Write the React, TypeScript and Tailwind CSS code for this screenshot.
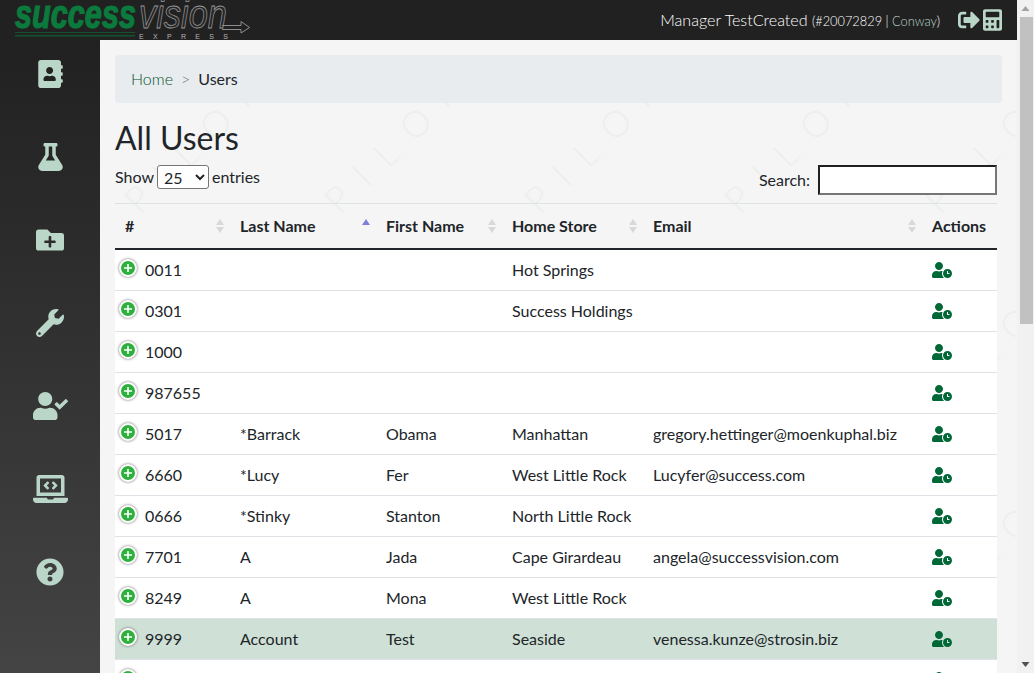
import { FaAddressBook, FaFlask, FaFolderPlus, FaWrench, FaUserCheck, FaLaptopCode, FaQuestionCircle, FaSignOutAlt, FaCalculator, FaUserClock } from "react-icons/fa";

const rows = [
  ["0011", "", "", "Hot Springs", ""],
  ["0301", "", "", "Success Holdings", ""],
  ["1000", "", "", "", ""],
  ["987655", "", "", "", ""],
  ["5017", "*Barrack", "Obama", "Manhattan", "gregory.hettinger@moenkuphal.biz"],
  ["6660", "*Lucy", "Fer", "West Little Rock", "Lucyfer@success.com"],
  ["0666", "*Stinky", "Stanton", "North Little Rock", ""],
  ["7701", "A", "Jada", "Cape Girardeau", "angela@successvision.com"],
  ["8249", "A", "Mona", "West Little Rock", ""],
  ["9999", "Account", "Test", "Seaside", "venessa.kunze@strosin.biz"],
  ["", "", "", "", ""],
];

const letters: [string, number, number][] = [["P", 37, 158], ["I", 61, 135], ["L", 85, 113], ["O", 115, 83], ["T", 140, 57]];

function Watermark() {
  const marks = [];
  for (let c = 0; c < 5; c++) {
    for (let r = 0; r < 4; r++) {
      for (const [ch, x, y] of letters) {
        marks.push(
          <span
            key={`${c}-${r}-${ch}`}
            className="absolute w-12 h-12 flex items-center justify-center text-[36px] leading-none font-light text-[#ecefec]"
            style={{ left: x - 24 + c * 200, top: y - 24 + r * 200, transform: "rotate(-45deg)" }}
          >
            {ch}
          </span>
        );
      }
    }
  }
  return <div className="absolute inset-0 overflow-hidden pointer-events-none">{marks}</div>;
}

function Sort({ active }: { active?: boolean }) {
  return (
    <svg width="8" height="14" viewBox="0 0 8 14" className="shrink-0">
      <polygon points="4,0 8,6 0,6" fill={active ? "#7f7fdc" : "#d6d8da"} />
      {!active && <polygon points="0,8 8,8 4,14" fill="#d6d8da" />}
    </svg>
  );
}

function Head({ label, sort, active, w, pl = "pl-[10px]" }: { label: string; sort?: boolean; active?: boolean; w: string; pl?: string }) {
  return (
    <th className={`${w} ${pl} pr-[6px] font-bold text-left text-[#212529] border-b-2 border-b-[#212529] h-[45px] p-0 align-middle`}>
      <div className="flex items-center justify-between">
        <span>{label}</span>
        {sort && <Sort active={active} />}
      </div>
    </th>
  );
}

function Logo() {
  return (
    <svg width="256" height="40" viewBox="0 0 256 40" className="block">
      <text x="15" y="28" textLength="121" lengthAdjust="spacingAndGlyphs" fontFamily="'Liberation Sans', sans-serif" fontWeight="700" fontStyle="italic" fontSize="40" fill="#0b7a3d" stroke="#0b7a3d" strokeWidth="1.2">success</text>
      <text x="139" y="28" textLength="88" lengthAdjust="spacingAndGlyphs" fontFamily="'Liberation Sans', sans-serif" fontStyle="italic" fontSize="40" fill="#262626" stroke="#9a9a9a" strokeWidth="0.8">vision</text>
      <rect x="15" y="32" width="120" height="1" fill="#14522f" />
      <rect x="15" y="35" width="120" height="1.5" fill="#14522f" />
      <text x="139" y="38.5" textLength="89" fontFamily="'Liberation Sans', sans-serif" fontSize="7" fill="#b5b5b5">EXPRESS</text>
      <path d="M222 25.5H241V21.5L249.5 27.5L241 33V29.5H222" fill="none" stroke="#9a9a9a" strokeWidth="0.9" />
    </svg>
  );
}

const navIcons = [
  <FaAddressBook key="a" className="w-[25px] h-7" />,
  <FaFlask key="b" className="w-[25px] h-7" />,
  <FaFolderPlus key="c" className="w-7 h-7" />,
  <FaWrench key="d" className="w-7 h-7" />,
  <FaUserCheck key="e" className="w-[35px] h-7" />,
  <FaLaptopCode key="f" className="w-[35px] h-7" />,
  <FaQuestionCircle key="g" className="w-7 h-7" />,
];

export default function App() {
  return (
    <div className="h-[673px] w-[1034px] overflow-hidden flex text-base text-[#212529] bg-[#f1f1f1]" style={{ fontFamily: "Lato, sans-serif" }}>
      <div className="w-[1017px] flex flex-col shrink-0">
        <header className="h-10 bg-[#212121] flex items-center justify-between shrink-0 pr-[15px]">
          <Logo />
          <div className="flex items-center">
            <div className="font-light text-white whitespace-nowrap mr-[18px]">
              <span className="text-[16.1px]">Manager TestCreated</span>{" "}
              <span className="text-[12.8px]">(#20072829 | <span className="text-[#b9d6c9]">Conway</span>)</span>
            </div>
            <FaSignOutAlt className="w-[22px] h-[22px] text-[#b9d6c9] mr-[3px]" />
            <FaCalculator className="w-[19px] h-[22px] text-[#b9d6c9]" />
          </div>
        </header>
        <div className="flex flex-1 min-h-0">
          <nav className="w-[100px] shrink-0 bg-gradient-to-b from-[#212121] to-[#444444] flex flex-col items-center pt-5 gap-[55px] text-[#b9d6c9]">
            {navIcons.map((icon, i) => (
              <div key={i} className="h-7 flex items-center justify-center">{icon}</div>
            ))}
          </nav>
          <main className="flex-1 bg-[#f5f5f5] relative overflow-hidden">
            <Watermark />
            <div className="relative pl-[15px] pr-[15px] pt-[15px]">
              <div className="h-12 bg-[#e9ecef] rounded flex items-center px-4 font-normal">
                <span className="text-[#00552c] font-light">Home</span>
                <span className="text-[#6c757d] mx-2 font-light">&gt;</span>
                <span>Users</span>
              </div>
              <h1 className="text-[32px] leading-[38px] mt-4 font-normal">All Users</h1>
              <div className="w-[882px] mt-2 flex justify-between items-start h-[30px]">
                <div className="flex items-center h-6 gap-[3px]">
                  <span>Show</span>
                  <select defaultValue="25" className="w-[52px] h-6 bg-white border border-[#767676] rounded-[3px] pl-0.5 text-base">
                    <option>25</option>
                  </select>
                  <span>entries</span>
                </div>
                <div className="flex items-center h-[30px]">
                  <span className="mr-2">Search:</span>
                  <input className="w-[179px] h-[30px] bg-white border-2 border-t-[#1f1f1f] border-l-[#1f1f1f] border-b-[#767676] border-r-[#767676]" />
                </div>
              </div>
              <table className="w-[882px] mt-2 border-collapse table-fixed border-t border-t-[#dee2e6]">
                <thead>
                  <tr>
                    <Head label="#" sort w="w-[115px]" />
                    <Head label="Last Name" sort active w="w-[146px]" />
                    <Head label="First Name" sort w="w-[126px]" />
                    <Head label="Home Store" sort w="w-[141px]" />
                    <Head label="Email" sort w="w-[279px]" />
                    <Head label="Actions" w="w-[75px]" />
                  </tr>
                </thead>
                <tbody>
                  {rows.map((r, i) => (
                    <tr key={i} className={`h-[41px] border-b border-b-[#dee2e6] ${r[0] === "9999" ? "bg-[#cfe0d6]" : "bg-white"}`}>
                      <td className="p-0 pl-1 align-top">
                        <div className="flex h-[40px]">
                          <span className="mt-[9px] w-[18px] h-[18px] rounded-full bg-[#2eb03c] border-2 border-white shadow-[0_0_3px_#666] flex items-center justify-center shrink-0">
                            <svg width="10" height="10" viewBox="0 0 10 10"><path d="M5 1v8M1 5h8" stroke="#fff" strokeWidth="1.6" /></svg>
                          </span>
                          <span className="ml-[8px] mt-[8px]">{r[0]}</span>
                        </div>
                      </td>
                      {r.slice(1).map((c, j) => (
                        <td key={j} className="p-0 pl-[10px] whitespace-nowrap align-middle">{c}</td>
                      ))}
                      <td className="p-0 pl-[10px] align-middle"><FaUserClock size={20} className="text-[#006837]" /></td>
                    </tr>
                  ))}
                </tbody>
              </table>
            </div>
          </main>
        </div>
      </div>
      <div className="w-[17px] shrink-0 bg-[#f1f1f1] flex flex-col items-center">
        <svg width="9" height="17" viewBox="0 0 9 17" className="shrink-0"><polygon points="4.5,6 8.5,11 0.5,11" fill="#a3a3a3" /></svg>
        <div className="w-[13px] h-[307px] bg-[#c1c1c1] ml-[1px]" />
        <div className="flex-1" />
        <svg width="9" height="17" viewBox="0 0 9 17" className="shrink-0"><polygon points="0.5,6 8.5,6 4.5,11" fill="#505050" /></svg>
      </div>
    </div>
  );
}
